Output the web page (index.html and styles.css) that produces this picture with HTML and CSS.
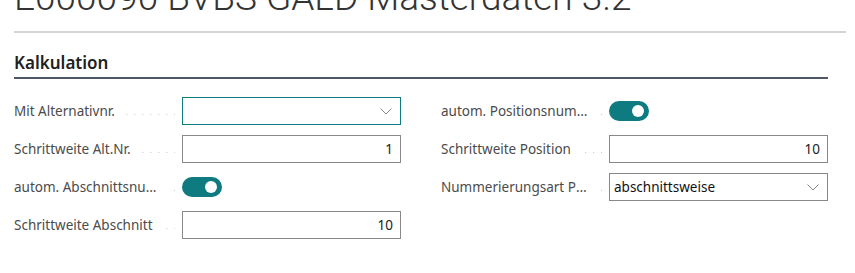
FILE: index.html
```html
<!DOCTYPE html>
<html lang="de">
<head>
  <meta charset="UTF-8" />
  <meta name="viewport" content="width=device-width, initial-scale=1.0" />
  <title>E000090 BVBS GALD Masterdaten 3.2</title>
  <link rel="stylesheet" href="styles.css">
</head>
<body>
  <header class="page-header">
    <h1 class="page-title">E000090 BVBS GALD Masterdaten 3.2</h1>
  </header>

  <section class="group">
    <h2 class="group-title">Kalkulation</h2>

    <div class="columns">
      <!-- linke Spalte -->
      <div class="column">
        <div class="field">
          <div class="caption"><span class="caption-text">Mit Alternativnr.</span><span class="leader"></span></div>
          <div class="control select focused">
            <span class="select-value"></span>
            <svg class="chevron" width="12" height="7" viewBox="0 0 12 7"><path d="M0.5 0.5 L6 6 L11.5 0.5" fill="none" stroke="#8a8886" stroke-width="1"/></svg>
          </div>
        </div>
        <div class="field">
          <div class="caption"><span class="caption-text">Schrittweite Alt.Nr.</span><span class="leader"></span></div>
          <div class="control number">1</div>
        </div>
        <div class="field">
          <div class="caption"><span class="caption-text">autom. Abschnittsnummerierung</span><span class="leader"></span></div>
          <div class="toggle on"><span class="knob"></span></div>
        </div>
        <div class="field">
          <div class="caption"><span class="caption-text">Schrittweite Abschnitt</span><span class="leader"></span></div>
          <div class="control number">10</div>
        </div>
      </div>

      <!-- rechte Spalte -->
      <div class="column">
        <div class="field">
          <div class="caption"><span class="caption-text">autom. Positionsnummerierung</span><span class="leader"></span></div>
          <div class="toggle on"><span class="knob"></span></div>
        </div>
        <div class="field">
          <div class="caption"><span class="caption-text">Schrittweite Position</span><span class="leader"></span></div>
          <div class="control number">10</div>
        </div>
        <div class="field">
          <div class="caption"><span class="caption-text">Nummerierungsart Positionen</span><span class="leader"></span></div>
          <div class="control select">
            <span class="select-value">abschnittsweise</span>
            <svg class="chevron" width="12" height="7" viewBox="0 0 12 7"><path d="M0.5 0.5 L6 6 L11.5 0.5" fill="none" stroke="#8a8886" stroke-width="1"/></svg>
          </div>
        </div>
      </div>
    </div>
  </section>
</body>
</html>
```

FILE: styles.css
```css
body {
  margin: 0;
  font-family: 'Noto Sans', 'Open Sans', sans-serif;
  font-size: 13.5px;
  color: #212121;
  background-color: #fff;
}
.page-header {
  margin: -20px 9px 0 14px;
  padding-bottom: 15px;
  border-bottom: 2px solid #d4d4d4;
}
.page-title {
  margin: 0;
  font-family: Roboto, 'Open Sans', sans-serif;
  font-size: 37px;
  line-height: 36px;
  font-weight: 300;
  color: #333;
  white-space: nowrap;
}
.group {
  margin: 18px 27px 0 14px;
}
.group-title {
  margin: 0;
  font-size: 17px;
  line-height: 24px;
  font-weight: 600;
  color: #212121;
  padding-bottom: 2px;
  border-bottom: 2px solid #4f5866;
}
.columns {
  margin-top: 18px;
  display: grid;
  grid-template-columns: 387px 387px;
  column-gap: 40px;
}
.column {
  display: flex;
  flex-direction: column;
  gap: 10px;
}
.field {
  display: grid;
  grid-template-columns: 168px 219px;
  height: 28px;
  align-items: center;
}
.caption {
  display: flex;
  align-items: center;
  padding-right: 7px;
  min-width: 0;
}
.caption-text {
  color: #4b4b4b;
  white-space: nowrap;
  overflow: hidden;
  text-overflow: ellipsis;
  max-width: 152px;
  margin-right: 8px;
  flex-shrink: 0;
}
.leader {
  flex: 1;
  height: 1px;
  margin-top: 7px;
  background-image: linear-gradient(to right, transparent 7px, #c4c4c4 7px);
  background-size: 8px 1px;
  background-position: right top;
  background-repeat: repeat-x;
}
.control {
  box-sizing: border-box;
  height: 28px;
  border: 1px solid #8a8886;
  display: flex;
  align-items: center;
  color: #212121;
}
.control.focused {
  border-color: #0f7b80;
}
.number {
  justify-content: flex-end;
  padding-right: 7px;
}
.select {
  justify-content: space-between;
  padding: 0 8px 0 4px;
  color: #111;
}
.chevron {
  display: block;
  margin-top: 1px;
}
.toggle {
  width: 40px;
  height: 20px;
  border-radius: 10px;
  background-color: #0e7b81;
  display: flex;
  align-items: center;
  justify-content: flex-end;
  padding: 0 5px;
  box-sizing: border-box;
}
.knob {
  width: 12px;
  height: 12px;
  border-radius: 50%;
  background-color: #fff;
}
```
